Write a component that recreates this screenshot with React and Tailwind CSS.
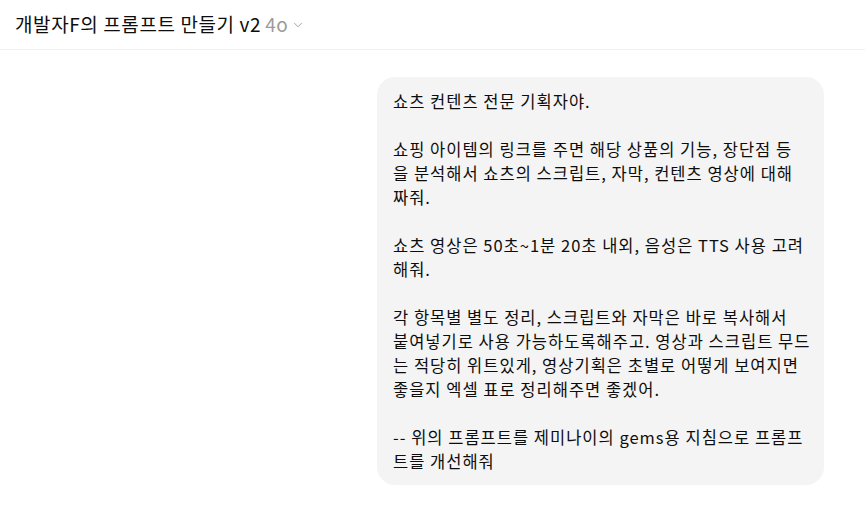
import React from "react";

const paragraphs = [
  ["쇼츠 컨텐츠 전문 기획자야."],
  [
    "쇼핑 아이템의 링크를 주면 해당 상품의 기능, 장단점 등",
    "을 분석해서 쇼츠의 스크립트, 자막, 컨텐츠 영상에 대해",
    "짜줘.",
  ],
  ["쇼츠 영상은 50초~1분 20초 내외, 음성은 TTS 사용 고려", "해줘."],
  [
    "각 항목별 별도 정리, 스크립트와 자막은 바로 복사해서",
    "붙여넣기로 사용 가능하도록해주고. 영상과 스크립트 무드",
    "는 적당히 위트있게, 영상기획은 초별로 어떻게 보여지면",
    "좋을지 엑셀 표로 정리해주면 좋겠어.",
  ],
  ["-- 위의 프롬프트를 제미나이의 gems용 지침으로 프롬프", "트를 개선해줘"],
];

function Header() {
  return (
    <header className="h-[50px] flex items-center px-[15px] border-b border-[#f0f0f0]">
      <div className="flex items-center text-[19px] tracking-[0.6px] text-[#0d0d0d]">
        <span>개발자F의 프롬프트 만들기 v2</span>
        <span className="ml-[4px] text-[#9b9b9b]">4o</span>
        <svg className="w-[14px] h-[14px] ml-[3px] text-[#9b9b9b]" viewBox="0 0 24 24" fill="none" stroke="currentColor" strokeWidth="1.6" strokeLinecap="round" strokeLinejoin="round">
          <path d="M6 9l6 6 6-6" />
        </svg>
      </div>
    </header>
  );
}

export default function App() {
  return (
    <div className="w-[865px] h-[508px] bg-white overflow-hidden" style={{ fontFamily: '"Noto Sans CJK KR", "Noto Sans", sans-serif' }}>
      <Header />
      <main className="flex justify-end pt-[27px] pr-[41px]">
        <div className="w-[447px] bg-[#f4f4f4] rounded-[18px] pl-[16px] pr-4 py-[12px] text-[16.5px] tracking-[1px] leading-[24px] text-[#0d0d0d] flex flex-col gap-6">
          {paragraphs.map((lines, i) => (
            <p key={i} className="whitespace-nowrap">
              {lines.map((line, j) => (
                <span key={j} className="block">{line}</span>
              ))}
            </p>
          ))}
        </div>
      </main>
    </div>
  );
}
